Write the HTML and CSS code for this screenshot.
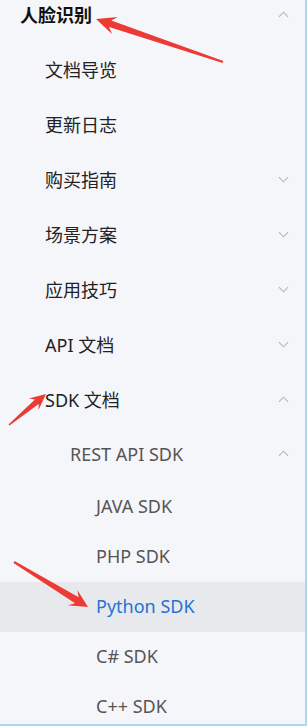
FILE: index.html
```html
<!DOCTYPE html>
<html lang="zh-CN">
<head>
  <meta charset="UTF-8" />
  <meta name="viewport" content="width=device-width, initial-scale=1" />
  <title>人脸识别 - 文档目录</title>
  <link rel="stylesheet" href="styles.css">
</head>
<body>
  <nav class="sidebar">
    <ul class="menu">
      <li class="item level-1 open">
        <span class="label">人脸识别</span>
        <svg class="chevron" viewBox="0 0 12 7"><polyline points="1,6 6,1 11,6" /></svg>
      </li>
      <li class="item level-2"><span class="label">文档导览</span></li>
      <li class="item level-2"><span class="label">更新日志</span></li>
      <li class="item level-2">
        <span class="label">购买指南</span>
        <svg class="chevron" viewBox="0 0 12 7"><polyline points="1,1 6,6 11,1" /></svg>
      </li>
      <li class="item level-2">
        <span class="label">场景方案</span>
        <svg class="chevron" viewBox="0 0 12 7"><polyline points="1,1 6,6 11,1" /></svg>
      </li>
      <li class="item level-2">
        <span class="label">应用技巧</span>
        <svg class="chevron" viewBox="0 0 12 7"><polyline points="1,1 6,6 11,1" /></svg>
      </li>
      <li class="item level-2">
        <span class="label">API 文档</span>
        <svg class="chevron" viewBox="0 0 12 7"><polyline points="1,1 6,6 11,1" /></svg>
      </li>
      <li class="item level-2">
        <span class="label">SDK 文档</span>
        <svg class="chevron" viewBox="0 0 12 7"><polyline points="1,6 6,1 11,6" /></svg>
      </li>
      <li class="item level-3">
        <span class="label">REST API SDK</span>
        <svg class="chevron" viewBox="0 0 12 7"><polyline points="1,6 6,1 11,6" /></svg>
      </li>
      <li class="item level-4"><span class="label">JAVA SDK</span></li>
      <li class="item level-4"><span class="label">PHP SDK</span></li>
      <li class="item level-4 active"><span class="label">Python SDK</span></li>
      <li class="item level-4"><span class="label">C# SDK</span></li>
      <li class="item level-4"><span class="label">C++ SDK</span></li>
    </ul>

    <!-- red annotation arrows drawn over the menu -->
    <svg class="marks" viewBox="0 0 307 726">
      <polygon points="96,19 117.8,16.9 111.3,20.5 223.3,61.1 222.7,62.9 109.1,27.1 112,33.9" />
      <polygon points="46,394 38.5,410 38.7,404 9.5,425.6 8.5,424.4 34.9,399.4 28.9,398.6" />
      <polygon points="88,607 67.9,605.3 75.1,603.2 13.5,562.9 14.5,561.1 78.7,597.2 77.3,589.9" />
    </svg>
  </nav>
</body>
</html>
```

FILE: styles.css
```css
/* Global Styles */
body {
  margin: 0;
  padding: 0;
  background: #f5f6fa;
  font-family: "Noto Sans", "Noto Sans CJK SC", sans-serif;
}
/* Sidebar box with the light blue edges */
.sidebar {
  position: relative;
  width: 305px;
  height: 724px;
  overflow: hidden;
  background: #f5f6fa;
  border-right: 2px solid #a8d8f2;
  border-bottom: 2px solid #a8d8f2;
}
.menu {
  list-style: none;
  margin: -12px 0 0 0;
  padding: 0;
}
.item {
  box-sizing: border-box;
  display: flex;
  align-items: center;
  justify-content: space-between;
  height: 55px;
  padding-right: 16px;
  padding-bottom: 3px;
  font-size: 18px;
  color: #222;
}
.level-1 {
  padding-left: 20px;
  font-weight: bold;
  color: #111;
}
.level-2 {
  padding-left: 45px;
}
.level-3 {
  height: 54px;
  padding-left: 70px;
  color: #555;
}
.level-4 {
  height: 50px;
  padding-left: 96px;
  color: #555;
}
.item.active {
  background: #e8e9ed;
  color: #2472d6;
}
.chevron {
  width: 11px;
  height: 7px;
  fill: none;
  stroke: #b4b4b8;
  stroke-width: 1.2;
}
/* Annotation overlay */
.marks {
  position: absolute;
  left: 0;
  top: 0;
  width: 307px;
  height: 726px;
  pointer-events: none;
}
.marks polygon {
  fill: #ec3a35;
}
```
